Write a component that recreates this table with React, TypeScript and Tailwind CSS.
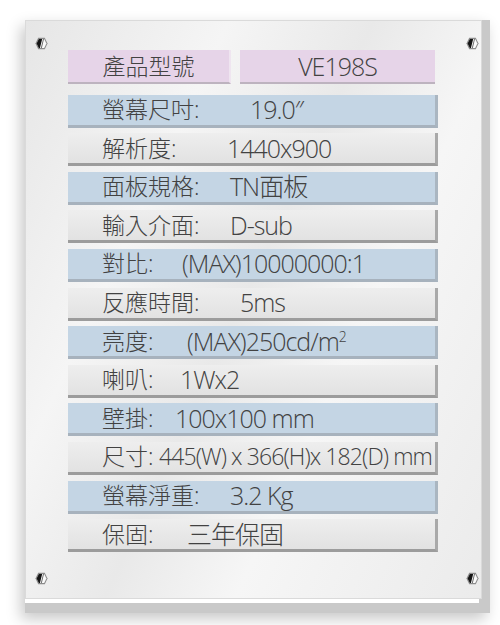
import React from "react";

type Spec = {
  label: string;
  value: React.ReactNode;
  tone: "blue" | "gray";
  labelW: string;
  valueCls?: string;
};

const specs: Spec[] = [
  { label: "螢幕尺吋:", value: "19.0″", tone: "blue", labelW: "w-[148px]" },
  { label: "解析度:", value: "1440x900", tone: "gray", labelW: "w-[125px]" },
  { label: "面板規格:", value: "TN面板", tone: "blue", labelW: "w-[128px]" },
  { label: "輸入介面:", value: "D-sub", tone: "gray", labelW: "w-[128px]" },
  { label: "對比:", value: "(MAX)10000000:1", tone: "blue", labelW: "w-[80px]" },
  { label: "反應時間:", value: "5ms", tone: "gray", labelW: "w-[138px]" },
  {
    label: "亮度:",
    value: (
      <>
        (MAX)250cd/m<sup className="text-[14px] -top-[9px]">2</sup>
      </>
    ),
    tone: "blue",
    labelW: "w-[85px]",
  },
  { label: "喇叭:", value: "1Wx2", tone: "gray", labelW: "w-[78px]" },
  { label: "壁掛:", value: "100x100 mm", tone: "blue", labelW: "w-[73px]" },
  {
    label: "尺寸:",
    value: "445(W) x 366(H)x 182(D) mm",
    tone: "gray",
    labelW: "w-[57px]",
    valueCls: "text-[23px] tracking-[-0.9px]",
  },
  { label: "螢幕淨重:", value: "3.2 Kg", tone: "blue", labelW: "w-[128px]" },
  { label: "保固:", value: "三年保固", tone: "gray", labelW: "w-[85px]" },
];

const Screw = ({ className }: { className: string }) => (
  <svg viewBox="0 0 12 12" className={`absolute w-[13px] h-[13px] ${className}`}>
    <polygon points="3,0.8 9,0.8 11.6,6 9,11.2 3,11.2 0.4,6" fill="#8c8c8c" />
    <polygon points="3.5,1.8 8.5,1.8 10.5,6 8.5,10.2 3.5,10.2 1.5,6" fill="#fbfbfb" />
    <polygon points="3.5,1.8 6.6,1.8 4.6,10.2 3.5,10.2 1.5,6" fill="#151515" />
    <polygon points="7.4,1.8 8.3,1.8 6.3,10.2 5.4,10.2" fill="#6a6a6a" />
  </svg>
);

const Row = ({ s }: { s: Spec }) => {
  const box =
    s.tone === "blue"
      ? "bg-[#c4d5e4] border-r-[3px] border-b-[3px] border-r-[#aab6c1] border-b-[#a7b2bd]"
      : "bg-gradient-to-b from-[#eeeeee] to-[#e2e2e2] border-r-[3px] border-b-[3px] border-r-[#a9a9a9] border-b-[#9c9c9c]";
  return (
    <div className={`flex items-center h-[33px] w-[370px] pl-[34px] ${box}`}>
      <span className={`${s.labelW} shrink-0 text-[23px] whitespace-nowrap`}>{s.label}</span>
      <span className={`whitespace-nowrap ${s.valueCls ?? "text-[25px] tracking-[-1px]"}`}>
        {s.value}
      </span>
    </div>
  );
};

export default function App() {
  return (
    <div className="w-[500px] h-[625px] bg-white overflow-hidden pt-[20px] pl-[25px]">
      <div
        className="relative w-[465px] h-[593px] bg-[#c9c9c9] shadow-[-4px_6px_14px_rgba(0,0,0,0.22)] text-[#424242] leading-none font-light"
        style={{ fontFamily: "'Open Sans','Noto Sans CJK TC',sans-serif" }}
      >
        <div className="relative w-[457px] h-[579px] border border-[#dadada] bg-[linear-gradient(115deg,#e6e6e6_0%,#f5f5f5_28%,#e9e9e9_48%,#f6f6f6_66%,#ebebeb_100%)] pt-[29px] pl-[42px]">
          <Screw className="left-[9px] top-[16px]" />
          <Screw className="left-[440px] top-[16px]" />
          <Screw className="left-[9px] top-[551px]" />
          <Screw className="left-[440px] top-[551px]" />
          <div className="flex flex-col gap-[5.6px]">
            <div className="flex gap-[9px] h-[34px] mb-[5px]">
              <div className="w-[163px] bg-[#e6d4e8] border-b-[2px] border-r-[2px] border-b-[#bdb3bf] border-r-[#efe5f0] flex items-center justify-center text-[23px]">
                產品型號
              </div>
              <div className="w-[195px] bg-[#e6d4e8] border-b-[2px] border-b-[#bdb3bf] flex items-center justify-center text-[25px] tracking-[-1px]">
                VE198S
              </div>
            </div>
            {specs.map((s, i) => (
              <Row key={i} s={s} />
            ))}
          </div>
        </div>
        <div className="w-[454px] h-[4px] bg-white" />
      </div>
    </div>
  );
}
